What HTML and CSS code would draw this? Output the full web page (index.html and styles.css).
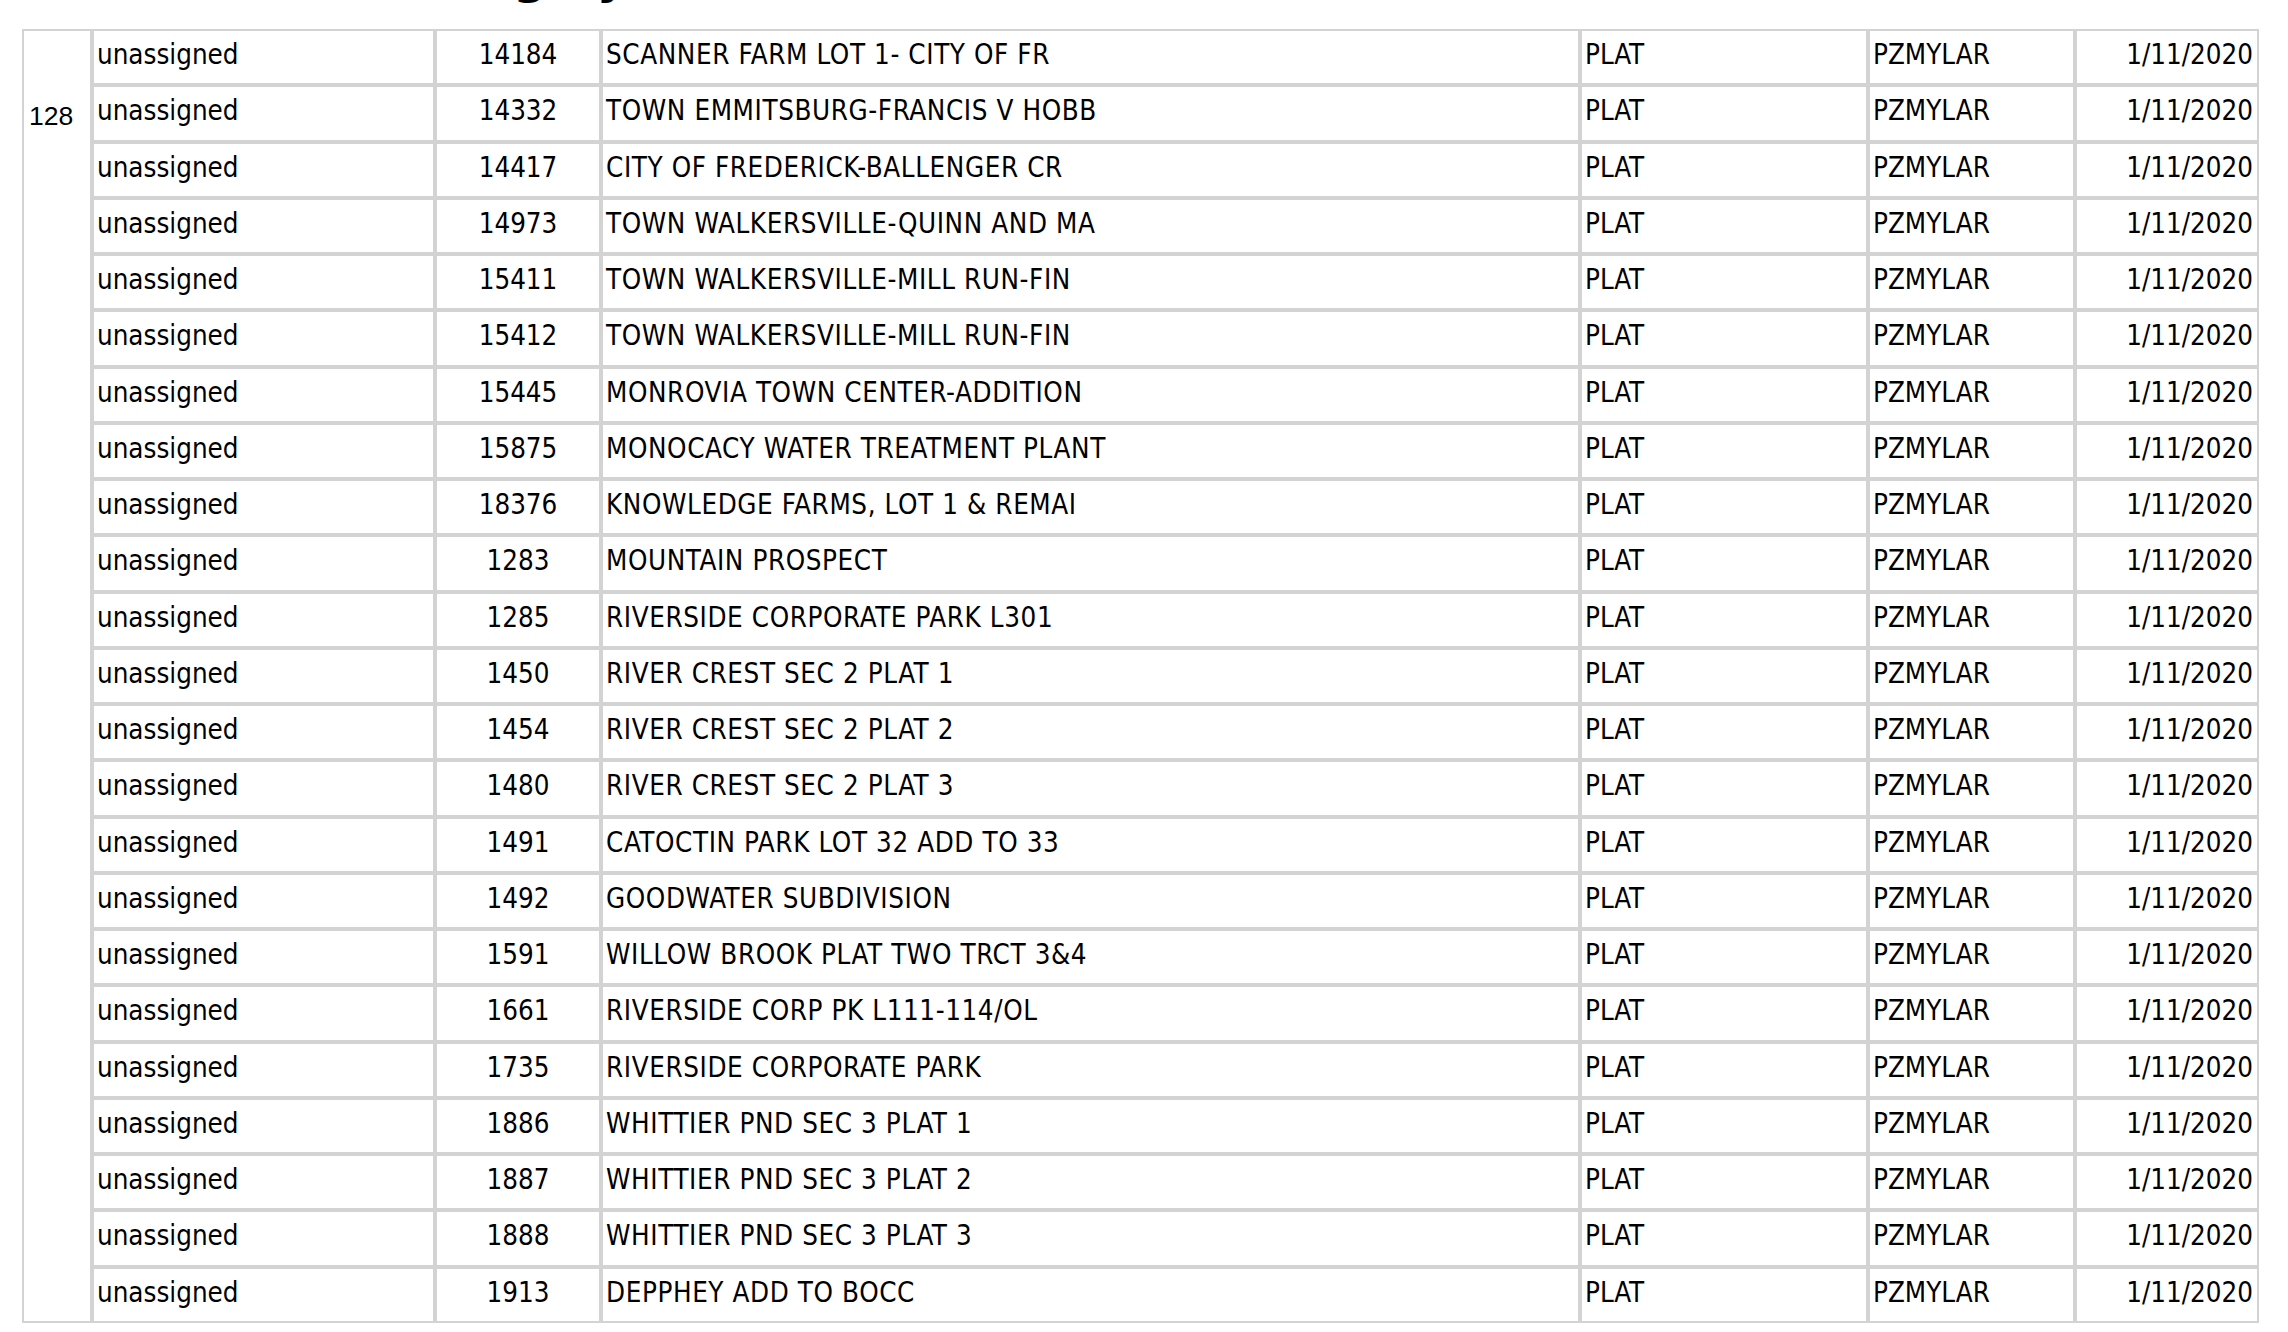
FILE: index.html
```html
<!DOCTYPE html>
<html>
<head>
<meta charset="utf-8">
<title>Scanned Items</title>
<link rel="stylesheet" href="styles.css">
</head>
<body>
<div class="title">
  <span class="title-main">Items Listing by Date</span>
  <span class="title-date">1/11/2020</span>
</div>
<table class="grid">
  <colgroup>
    <col class="c-count">
    <col class="c-status">
    <col class="c-num">
    <col class="c-name">
    <col class="c-type">
    <col class="c-user">
    <col class="c-date">
  </colgroup>
  <tbody>
    <tr><td class="count" rowspan="23">128</td><td>unassigned</td><td class="num">14184</td><td class="name">SCANNER FARM LOT 1- CITY OF FR</td><td>PLAT</td><td>PZMYLAR</td><td class="date">1/11/2020</td></tr>
    <tr><td>unassigned</td><td class="num">14332</td><td class="name">TOWN EMMITSBURG-FRANCIS V HOBB</td><td>PLAT</td><td>PZMYLAR</td><td class="date">1/11/2020</td></tr>
    <tr><td>unassigned</td><td class="num">14417</td><td class="name">CITY OF FREDERICK-BALLENGER CR</td><td>PLAT</td><td>PZMYLAR</td><td class="date">1/11/2020</td></tr>
    <tr><td>unassigned</td><td class="num">14973</td><td class="name">TOWN WALKERSVILLE-QUINN AND MA</td><td>PLAT</td><td>PZMYLAR</td><td class="date">1/11/2020</td></tr>
    <tr><td>unassigned</td><td class="num">15411</td><td class="name">TOWN WALKERSVILLE-MILL RUN-FIN</td><td>PLAT</td><td>PZMYLAR</td><td class="date">1/11/2020</td></tr>
    <tr><td>unassigned</td><td class="num">15412</td><td class="name">TOWN WALKERSVILLE-MILL RUN-FIN</td><td>PLAT</td><td>PZMYLAR</td><td class="date">1/11/2020</td></tr>
    <tr><td>unassigned</td><td class="num">15445</td><td class="name">MONROVIA TOWN CENTER-ADDITION</td><td>PLAT</td><td>PZMYLAR</td><td class="date">1/11/2020</td></tr>
    <tr><td>unassigned</td><td class="num">15875</td><td class="name">MONOCACY WATER TREATMENT PLANT</td><td>PLAT</td><td>PZMYLAR</td><td class="date">1/11/2020</td></tr>
    <tr><td>unassigned</td><td class="num">18376</td><td class="name">KNOWLEDGE FARMS, LOT 1 &amp; REMAI</td><td>PLAT</td><td>PZMYLAR</td><td class="date">1/11/2020</td></tr>
    <tr><td>unassigned</td><td class="num">1283</td><td class="name">MOUNTAIN PROSPECT</td><td>PLAT</td><td>PZMYLAR</td><td class="date">1/11/2020</td></tr>
    <tr><td>unassigned</td><td class="num">1285</td><td class="name">RIVERSIDE CORPORATE PARK L301</td><td>PLAT</td><td>PZMYLAR</td><td class="date">1/11/2020</td></tr>
    <tr><td>unassigned</td><td class="num">1450</td><td class="name">RIVER CREST SEC 2 PLAT 1</td><td>PLAT</td><td>PZMYLAR</td><td class="date">1/11/2020</td></tr>
    <tr><td>unassigned</td><td class="num">1454</td><td class="name">RIVER CREST SEC 2 PLAT 2</td><td>PLAT</td><td>PZMYLAR</td><td class="date">1/11/2020</td></tr>
    <tr><td>unassigned</td><td class="num">1480</td><td class="name">RIVER CREST SEC 2 PLAT 3</td><td>PLAT</td><td>PZMYLAR</td><td class="date">1/11/2020</td></tr>
    <tr><td>unassigned</td><td class="num">1491</td><td class="name">CATOCTIN PARK LOT 32 ADD TO 33</td><td>PLAT</td><td>PZMYLAR</td><td class="date">1/11/2020</td></tr>
    <tr><td>unassigned</td><td class="num">1492</td><td class="name">GOODWATER SUBDIVISION</td><td>PLAT</td><td>PZMYLAR</td><td class="date">1/11/2020</td></tr>
    <tr><td>unassigned</td><td class="num">1591</td><td class="name">WILLOW BROOK PLAT TWO TRCT 3&amp;4</td><td>PLAT</td><td>PZMYLAR</td><td class="date">1/11/2020</td></tr>
    <tr><td>unassigned</td><td class="num">1661</td><td class="name">RIVERSIDE CORP PK L111-114/OL</td><td>PLAT</td><td>PZMYLAR</td><td class="date">1/11/2020</td></tr>
    <tr><td>unassigned</td><td class="num">1735</td><td class="name">RIVERSIDE CORPORATE PARK</td><td>PLAT</td><td>PZMYLAR</td><td class="date">1/11/2020</td></tr>
    <tr><td>unassigned</td><td class="num">1886</td><td class="name">WHITTIER PND SEC 3 PLAT 1</td><td>PLAT</td><td>PZMYLAR</td><td class="date">1/11/2020</td></tr>
    <tr><td>unassigned</td><td class="num">1887</td><td class="name">WHITTIER PND SEC 3 PLAT 2</td><td>PLAT</td><td>PZMYLAR</td><td class="date">1/11/2020</td></tr>
    <tr><td>unassigned</td><td class="num">1888</td><td class="name">WHITTIER PND SEC 3 PLAT 3</td><td>PLAT</td><td>PZMYLAR</td><td class="date">1/11/2020</td></tr>
    <tr><td>unassigned</td><td class="num">1913</td><td class="name">DEPPHEY ADD TO BOCC</td><td>PLAT</td><td>PZMYLAR</td><td class="date">1/11/2020</td></tr>
  </tbody>
</table>
</body>
</html>
```
FILE: styles.css
```css
html, body {
  margin: 0;
  padding: 0;
  background: #ffffff;
}

body {
  padding-left: 22px;
  font-family: "DejaVu Sans Condensed", "DejaVu Sans", sans-serif;
  color: #000000;
  overflow: hidden;
}

.title {
  display: flex;
  align-items: baseline;
  height: 47px;
  margin-top: -47px;
  font-family: "DejaVu Sans", sans-serif;
  font-weight: bold;
  line-height: 47px;
  white-space: nowrap;
}

.title-main {
  margin-left: 180px;
  font-size: 47px;
}

.title-date {
  margin-left: 252px;
  font-size: 28px;
}

.grid {
  margin-top: 29px;
  table-layout: fixed;
  width: 2237px;
  height: 1294px;
  border-collapse: separate;
  border-spacing: 0;
  font-size: 27.5px;
}

.c-count { width: 70px; }
.c-status { width: 343px; }
.c-num { width: 166px; }
.c-name { width: 979px; }
.c-type { width: 288px; }
.c-user { width: 207px; }
.c-date { width: 184px; }

.grid tr {
  height: 56px;
}

.grid td {
  box-sizing: border-box;
  border: 2px solid #d3d3d3;
  padding: 5px 4px 0 3px;
  vertical-align: top;
  line-height: 36px;
  white-space: nowrap;
  overflow: hidden;
}

.grid td.name {
  letter-spacing: 0.6px;
}

.grid td.num {
  text-align: center;
  padding-left: 0;
  padding-right: 0;
}

.grid td.date {
  text-align: right;
}

.grid td.count {
  font-family: "Liberation Sans", Arial, sans-serif;
  font-size: 26.5px;
  line-height: 30px;
  padding-top: 70px;
  padding-left: 5px;
}
```
